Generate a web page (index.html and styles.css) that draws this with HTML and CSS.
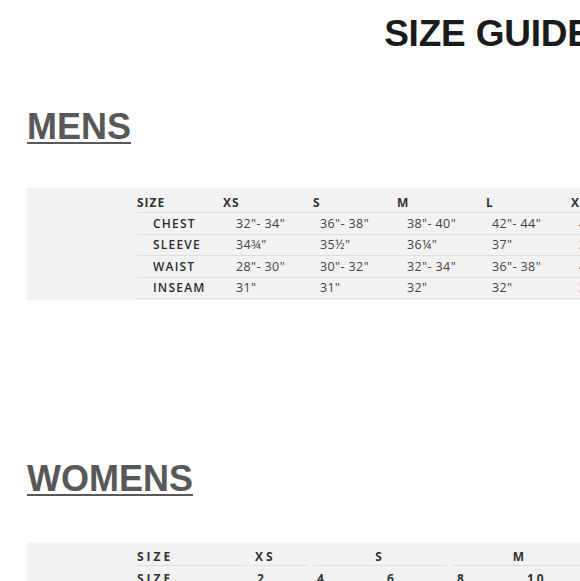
FILE: index.html
```html
<!DOCTYPE html>
<html lang="en">
<head>
<meta charset="utf-8">
<title>Size Guide</title>
<link rel="stylesheet" href="styles.css">
</head>
<body>
<div class="page">
  <h1 class="title">SIZE GUIDE</h1>

  <h2 class="section section-mens"><span>MENS</span></h2>
  <div class="chart chart-mens">
    <table class="mens">
      <colgroup>
        <col class="w-label"><col class="w-xs"><col class="w-s"><col class="w-m"><col class="w-l"><col class="w-xl"><col class="w-xxl">
      </colgroup>
      <tr class="head">
        <th>SIZE</th><th>XS</th><th>S</th><th>M</th><th>L</th><th>XL</th><th>XXL</th>
      </tr>
      <tr>
        <td class="lab">CHEST</td><td class="c1">32"- 34"</td><td class="c2">36"- 38"</td><td class="c3">38"- 40"</td><td class="c4">42"- 44"</td><td class="c5">46"- 48"</td><td class="c6">50"- 52"</td>
      </tr>
      <tr>
        <td class="lab">SLEEVE</td><td class="c1">34¾"</td><td class="c2">35½"</td><td class="c3">36¼"</td><td class="c4">37"</td><td class="c5">37¾"</td><td class="c6">38½"</td>
      </tr>
      <tr>
        <td class="lab">WAIST</td><td class="c1">28"- 30"</td><td class="c2">30"- 32"</td><td class="c3">32"- 34"</td><td class="c4">36"- 38"</td><td class="c5">40"- 42"</td><td class="c6">44"- 46"</td>
      </tr>
      <tr>
        <td class="lab">INSEAM</td><td class="c1">31"</td><td class="c2">31"</td><td class="c3">32"</td><td class="c4">32"</td><td class="c5">32"</td><td class="c6">32"</td>
      </tr>
    </table>
  </div>

  <h2 class="section section-womens"><span>WOMENS</span></h2>
  <div class="chart chart-womens">
    <table class="womens">
      <colgroup>
        <col class="wc-label"><col class="wc-a"><col class="wc-b"><col class="wc-b"><col class="wc-b"><col class="wc-b"><col class="wc-b"><col class="wc-b">
      </colgroup>
      <tr class="head">
        <th class="left">SIZE</th><th class="left xs">XS</th><th colspan="2">S</th><th colspan="2">M</th><th colspan="2">L</th>
      </tr>
      <tr class="nums">
        <td>SIZE</td><td>2</td><td>4</td><td>6</td><td>8</td><td>10</td><td>12</td><td>14</td>
      </tr>
    </table>
  </div>
</div>
</body>
</html>
```

FILE: styles.css
```css
html, body {
  margin: 0;
  padding: 0;
  background: #ffffff;
  overflow: hidden;
}

.page {
  width: 976px;
  font-family: "Liberation Sans", Arial, sans-serif;
}

.title {
  margin: 15px 0 0 0;
  font-size: 37px;
  line-height: 37px;
  font-weight: 700;
  color: #1b1b1b;
  text-align: center;
  letter-spacing: -0.2px;
}

.section {
  margin: 0 0 0 27px;
  font-size: 36px;
  line-height: 36px;
  font-weight: 700;
  color: #585858;
  text-decoration: underline;
  text-decoration-thickness: 2px;
  text-underline-offset: 3px;
}

.section-mens {
  margin-top: 57px;
}

.section-womens {
  margin-top: 161px;
}

.chart {
  margin-left: 27px;
  width: 949px;
  background: #f2f2f2;
  font-family: "Open Sans", "DejaVu Sans", sans-serif;
  color: #333333;
}

.chart-mens {
  margin-top: 43px;
  padding: 4px 0 1px 110px;
  box-sizing: border-box;
}

.chart-womens {
  margin-top: 45px;
  padding: 6px 0 20px 110px;
  box-sizing: border-box;
}

table {
  border-collapse: collapse;
  table-layout: fixed;
}

.mens .w-label { width: 86px; }
.mens .w-xs { width: 90px; }
.mens .w-s { width: 84px; }
.mens .w-m { width: 89px; }
.mens .w-l { width: 85px; }
.mens .w-xl { width: 85px; }
.mens .w-xxl { width: 85px; }

.mens th,
.mens td {
  padding: 0;
  text-align: left;
  white-space: nowrap;
  border-bottom: 1px solid #dedede;
  font-size: 12px;
  line-height: 16px;
}

.mens th {
  height: 19px;
  padding-top: 1px;
  font-weight: 700;
  letter-spacing: 1px;
  color: #333;
  vertical-align: middle;
}

.mens td {
  height: 19.5px;
  padding-top: 1px;
  vertical-align: middle;
}

.mens td.lab {
  padding-left: 16px;
  font-weight: 600;
  letter-spacing: 1.2px;
  color: #2e2e2e;
}

.mens td.c1, .mens td.c2, .mens td.c3, .mens td.c4, .mens td.c5, .mens td.c6 {
  font-size: 12.5px;
  color: #444;
  letter-spacing: 0.4px;
}

.mens td.c1 { padding-left: 13px; }
.mens td.c2 { padding-left: 7px; }
.mens td.c3 { padding-left: 10px; }
.mens td.c4 { padding-left: 6px; }
.mens td.c5 { padding-left: 8px; }
.mens td.c6 { padding-left: 8px; }

.womens {
  border-collapse: separate;
  border-spacing: 6px 0;
  margin-left: -6px;
}

.womens .wc-label { width: 110px; }
.womens .wc-a { width: 54px; }
.womens .wc-b { width: 64px; }

.womens th,
.womens td {
  padding: 0;
  white-space: nowrap;
  font-size: 12px;
  line-height: 16px;
  font-weight: 700;
  color: #333;
}

.womens th {
  height: 15px;
  padding-top: 1px;
  border-bottom: 1px solid #dedede;
  letter-spacing: 3px;
  text-align: center;
  vertical-align: middle;
}

.womens th.left {
  text-align: left;
}

.womens th.xs {
  padding-left: 2px;
}

.womens td {
  padding-top: 3px;
  height: 20px;
  text-align: left;
  padding-left: 4px;
  letter-spacing: 3px;
}

.womens td:first-child {
  padding-left: 0;
}
```
